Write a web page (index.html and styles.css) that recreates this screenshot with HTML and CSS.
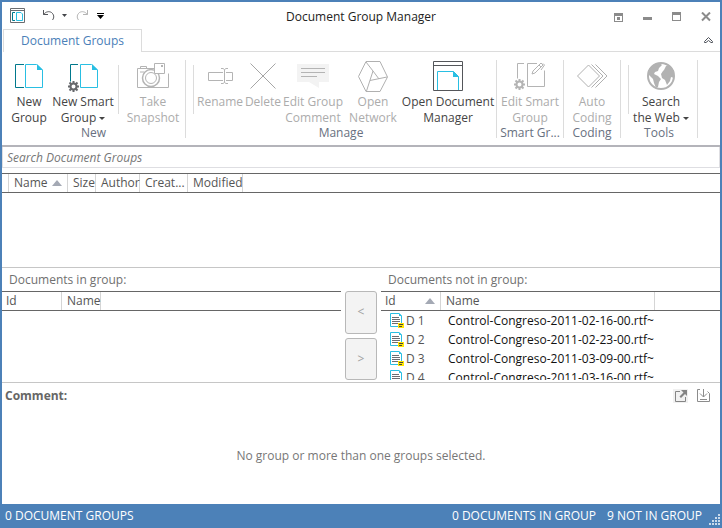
FILE: index.html
```
<!DOCTYPE html>
<html lang="en">
<head>
<meta charset="utf-8">
<title>Document Group Manager</title>
<link rel="stylesheet" href="styles.css">
</head>
<body>
<div class="window">
  <header class="titlebar">
    <div class="quick">
      <svg class="app-icon" width="15" height="15" viewBox="0 0 15 15" fill="none"><path d="M.5.5h14v14H.5zM.5 2.500h14" stroke="#6a6c70"/><path d="M5 4.500H2.500v8H5" stroke="#00788c"/><path d="M6.500 4.500H11l1.500 1.500v6.500h-6z" stroke="#29bfe3"/></svg>
      <button class="bare undo" aria-label="Undo"><svg width="12" height="11" viewBox="0 0 12 11" fill="none" stroke="#54565a"><path d="M.5 0v4.500H5M.5 4.500C3 1.500 6 1 8.500 2.500c2.500 2 3 5 1 7.500"/></svg></button>
      <button class="bare undo-menu" aria-label="Undo history"><svg width="5" height="3"><path d="M0 0h5L2.500 3z" fill="#44464a"/></svg></button>
      <button class="bare redo" aria-label="Redo" disabled><svg width="12" height="11" viewBox="0 0 12 11" fill="none" stroke="#b4b4b4"><path d="M11.500 0v4.500H7M11.500 4.500C9 1.500 6 1 3.500 2.500 1 4.500.5 7.500 2.500 10"/></svg></button>
      <button class="bare customize" aria-label="Customize toolbar"><svg width="7" height="6"><path d="M0 0h7v1H0zM0 2h7L3.500 6z" fill="#000"/></svg></button>
    </div>
    <h1>Document Group Manager</h1>
    <div class="controls">
      <button class="bare" aria-label="Ribbon display"><svg width="9" height="9"><path d="M0 0h9v9H0zM1 3v5h7V3z" fill="#8b8b8b" fill-rule="evenodd"/><path d="M3 4h3v3H3z" fill="#8b8b8b"/></svg></button>
      <button class="bare" aria-label="Minimize"><svg width="9" height="9"><path d="M0 4h9v3H0z" fill="#8b8b8b"/></svg></button>
      <button class="bare" aria-label="Maximize"><svg width="9" height="11"><path d="M0 0h9v9H0zM1 3v5h7V3z" fill="#8b8b8b" fill-rule="evenodd"/></svg></button>
      <button class="bare" aria-label="Close"><svg width="10" height="11" fill="none" stroke="#8b8b8b" stroke-width="2"><path d="M1 .5l8 8M9 .5l-8 8"/></svg></button>
    </div>
  </header>
  <nav class="tabs">
    <button class="tab">Document Groups</button>
    <span class="tab-rest"><button class="bare" aria-label="Collapse ribbon"><svg width="9" height="7" viewBox="0 0 9 7" fill="none" stroke="#50545c"><path d="M.5 4.500l4-4 4 4v1H7l-2.500-2-2.500 2H.5z"/></svg></button></span>
  </nav>
  <div class="ribbon">
    <section class="group new">
      <div class="tools">
        <button class="tool w54"><svg width="28" height="24" fill="none"><path d="M9 .5H.5v23H9" stroke="#00788c"/><path d="M10.500.5h11l6 5.500v17.500h-17z" stroke="#29bfe3"/><path d="M22 0v6h6z" fill="#29bfe3"/></svg><span>New<br>Group</span></button>
        <button class="tool w54"><svg class="geared" width="30" height="28" viewBox="-2 0 30 28" fill="none"><path d="M8 .5H.5v17" stroke="#00788c"/><path d="M10.500.5h11l6 5.500v17.500h-17z" stroke="#29bfe3"/><path d="M22 0v6h6z" fill="#29bfe3"/><use href="#gear" x="-2" y="17" color="#66686c"/></svg><span>New Smart<br>Group <i class="caret"></i></span></button>
        <span class="sep"></span>
        <button class="tool w52" disabled><svg width="32" height="26" viewBox="0 0 32 26" fill="none" stroke="#b4b4b4"><path d="M17.500 5.500H.5v19h31v-14M3.500 5.500v-2h6v2"/><circle cx="14" cy="15" r="8.500" stroke-width="1.500" fill="#fff"/><circle cx="14" cy="15" r="5.500"/><path d="M17.500.5h10v10h-10z" fill="#fff"/><path d="M3 9h4"/><path d="M24 2v2h2V2z" fill="#b4b4b4" stroke="none"/></svg><span>Take<br>Snapshot</span></button>
      </div>
      <h2>New</h2>
    </section>
    <section class="group manage">
      <div class="tools">
        <span class="sep"></span>
        <button class="tool w44" disabled><svg width="25" height="16" fill="none" stroke="#b4b4b4"><path d="M15 4.500H.5v8H15M18 4.500h6.500v8H18M13 .5h2l1.500 1 1.500-1h2M16.500 1.500v13M13 15.500h2l1.500-1 1.500 1h2"/></svg><span>Rename</span></button>
        <button class="tool w42" disabled><svg width="26" height="26" fill="none" stroke="#a6a6a6"><path d="M.5.5l25 25M25.500.5l-25 25"/></svg><span>Delete</span></button>
        <button class="tool w58" disabled><svg width="32" height="24"><path d="M0 0h32v18H22v6l-10-6H0z" fill="#f3f3f3"/><path d="M4 4.500h24M4 8.500h24M4 12.500h16" stroke="#b4b4b4"/></svg><span>Edit Group<br>Comment</span></button>
        <button class="tool w62" disabled><svg width="30" height="31" fill="none" stroke="#b0b0b0"><path d="M8 .5h14L29.500 16 22 30.500H8L.5 15.500zM8.500 30L15 10 8 1M15 10l6 8M12 19.500l17-3.500"/></svg><span>Open<br>Network</span></button>
        <button class="tool w88"><svg width="30" height="30" fill="none"><path d="M.5.5h29v29H.5zM.5 4.500h29" stroke="#54565a"/><path d="M4.500 29V10.500h16l5 5V29" stroke="#29bfe3"/><path d="M20 10v6h6z" fill="#29bfe3"/></svg><span>Open Document<br>Manager</span></button>
      </div>
      <h2>Manage</h2>
    </section>
    <section class="group">
      <div class="tools">
        <button class="tool w66" disabled><svg width="32" height="28" fill="none" stroke="#b4b4b4"><path d="M10 1.500H3.500v15M23 1.500H13.500v23h17v-16"/><path d="M18 12l1-3 8-8 2 2-8 8zM25 3l2 2M29 1.500l1.500 1.500L27 8"/><use href="#gear" x="0" y="17" color="#b4b4b4"/></svg><span>Edit Smart<br>Group</span></button>
      </div>
      <h2>Smart Gr...</h2>
    </section>
    <section class="group">
      <div class="tools">
        <button class="tool w56" disabled><svg width="31" height="24" fill="none" stroke="#b0b0b0"><path d="M11.500 1L.5 12l11 11 11-11zM14.500.5L26 12 14.500 23.500M18.500.5L30 12 18.500 23.500"/></svg><span>Auto<br>Coding</span></button>
      </div>
      <h2>Coding</h2>
    </section>
    <section class="group web">
      <div class="tools">
        <span class="sep"></span>
        <button class="tool w56"><svg width="28" height="28"><circle cx="14" cy="14" r="13" fill="#fff" stroke="#b2b2b2" stroke-width="2"/><path d="M3 6L8 2l5-1 2 2-3 3-1 3-3 1-1 2 4 2 3 3-2 3-1 5-2 1-2-5-1-4-4-4-1-4zM17 8l2-4 3-1 5 6v7l-3-1-1 4-3 4-2-5-3-2-1-4 2-3z" fill="#b2b2b2"/></svg><span>Search<br>the Web <i class="caret"></i></span></button>
      </div>
      <h2>Tools</h2>
    </section>
  </div>
  <input class="search" type="text" placeholder="Search Document Groups" aria-label="Search Document Groups">
  <main>
    <section class="groups">
      <table>
        <colgroup><col class="c7"><col class="c59"><col class="c28"><col class="c44"><col class="c48"><col class="c55"><col></colgroup>
        <thead><tr><th></th><th>Name <i class="sort"></i></th><th>Size</th><th>Author</th><th>Creat...</th><th>Modified</th><th></th></tr></thead>
      </table>
    </section>
    <section class="docs">
      <div class="pane">
        <h3>Documents in group:</h3>
        <table>
          <colgroup><col class="c60"><col class="c39"><col></colgroup>
          <thead><tr><th class="id">Id</th><th>Name</th><th></th></tr></thead>
        </table>
      </div>
      <div class="moves">
        <button disabled aria-label="Add to group">&lt;</button>
        <button disabled aria-label="Remove from group">&gt;</button>
      </div>
      <div class="pane">
        <h3>Documents not in group:</h3>
        <table>
          <colgroup><col class="c60"><col class="c214"><col></colgroup>
          <thead><tr><th class="id">Id <i class="sort"></i></th><th>Name</th><th></th></tr></thead>
          <tbody>
            <tr><td><svg width="14" height="15"><use href="#doc"/></svg>D 1</td><td>Control-Congreso-2011-02-16-00.rtf~</td><td></td></tr>
            <tr><td><svg width="14" height="15"><use href="#doc"/></svg>D 2</td><td>Control-Congreso-2011-02-23-00.rtf~</td><td></td></tr>
            <tr><td><svg width="14" height="15"><use href="#doc"/></svg>D 3</td><td>Control-Congreso-2011-03-09-00.rtf~</td><td></td></tr>
            <tr><td><svg width="14" height="15"><use href="#doc"/></svg>D 4</td><td>Control-Congreso-2011-03-16-00.rtf~</td><td></td></tr>
          </tbody>
        </table>
      </div>
    </section>
    <section class="comment">
      <div class="comment-head">
        <h3>Comment:</h3>
        <button class="bare" aria-label="Open comment editor"><svg width="15" height="14"><path d="M0 0h15v14H0z" fill="#f1f1f1"/><path d="M7 2.500H2.500v10h10V8" fill="none" stroke="#858585"/><path d="M8 1h6v6l-2-2-4 4-1.500-1.500 4-4z" fill="#858585"/></svg></button>
        <button class="bare" aria-label="Save comment"><svg width="13" height="13" fill="none" stroke="#8c8c8c"><path d="M3 .5H.5v12h12v-8l-2-2M6.500 0v8M3 4.500L6.500 8 10 4.500M3 10.500h7"/></svg></button>
      </div>
      <p>No group or more than one groups selected.</p>
    </section>
  </main>
  <footer>
    <span class="total">0 DOCUMENT GROUPS</span>
    <span>0 DOCUMENTS IN GROUP</span>
    <span>9 NOT IN GROUP</span>
    <svg width="11" height="11" fill="#c9daeb"><path d="M9 0h2v2H9zM6 3h2v2H6zM9 3h2v2H9zM3 6h2v2H3zM6 6h2v2H6zM9 6h2v2H9zM0 9h2v2H0zM3 9h2v2H3zM6 9h2v2H6zM9 9h2v2H9z"/></svg>
  </footer>
</div>
<svg class="defs" width="0" height="0" aria-hidden="true">
  <symbol id="gear" width="11" height="11" viewBox="0 0 11 11"><circle cx="5.500" cy="5.500" r="3" fill="none" stroke="currentColor" stroke-width="2"/><path d="M5.500 0v2M5.500 9v2M0 5.500h2M9 5.500h2M1.500 1.500L3 3M8 8l1.500 1.500M9.500 1.500L8 3M3 8L1.500 9.500" stroke="currentColor" stroke-width="2"/></symbol>
  <symbol id="doc" width="14" height="15" viewBox="0 0 14 15"><path d="M.5.5H9l2.500 2.500v10.500H.5z" fill="#fff" stroke="#29bfe3"/><path d="M9 0v3h3z" fill="#29bfe3"/><path d="M2 4.500h7M2 6.500h8M2 8.500h8M2 10.500h6" stroke="#6b6d71"/><path d="M8 10h6v5H8z" fill="#ffe600"/><path d="M9 11.500h4M9 13.500h3" stroke="#444"/></symbol>
</svg>
</body>
</html>
```

FILE: styles.css
```
* { box-sizing: border-box; }
body { margin: 0; font: 12px/16px "Open Sans", "Noto Sans", sans-serif; color: #444; }
button, input { font: inherit; color: inherit; }
h1, h2, h3, p { margin: 0; font-size: 12px; font-weight: 400; }
svg { display: block; flex: none; }
.defs { position: absolute; }
.bare { padding: 0; border: 0; background: none; display: flex; }

.window { height: 100vh; display: flex; flex-direction: column; background: #fff; border: 2px solid #4c81b8; border-bottom: 0; }

.titlebar { height: 27px; flex: none; display: grid; grid-template-columns: 1fr auto 1fr; align-items: center; }
.titlebar h1 { color: #222; padding-top: 2px; }
.quick { display: flex; align-items: center; padding-left: 8px; }
.app-icon { margin-right: 18px; }
.undo { margin-right: 7px; }
.undo-menu { margin-right: 9px; }
.redo { margin-right: 9px; }
.controls { display: flex; justify-content: flex-end; align-items: center; gap: 20px; padding: 3px 9px 0 0; }

.tabs { display: flex; height: 23px; flex: none; padding-left: 1px; }
.tab { width: 139px; padding: 0; border: 1px solid #dcdcdc; border-bottom: 0; background: #fff; color: #4a80b8; }
.tab-rest { flex: 1; display: flex; justify-content: flex-end; align-items: center; padding-right: 7px; border-bottom: 1px solid #dcdcdc; }

.ribbon { display: flex; flex: none; height: 95px; padding-top: 8px; border-bottom: 2px solid #b4b4ba; }
.group { height: 78px; border-right: 1px solid #dcdcdc; }
.group h2 { text-align: center; line-height: 14px; color: #687080; }
.tools { display: flex; height: 66px; }
.sep { width: 1px; height: 49px; margin: 5px 4px 0 7px; background: #dcdcdc; }
.new .tools { padding-right: 6px; }
.new .sep { margin: 5px 8px 0; }
.manage .tools { padding-right: 4px; }
.web .tools { padding-right: 8px; }
.tool { display: grid; grid-template-rows: 32px auto; align-content: start; justify-items: center; row-gap: 2px; padding: 0; border: 0; background: none; white-space: nowrap; justify-content: center; }
.tool svg { align-self: center; }
.tool .geared { align-self: end; }
.tool:disabled { color: #acacac; }
.w42 { width: 42px; } .w44 { width: 44px; } .w52 { width: 52px; } .w54 { width: 54px; } .w56 { width: 56px; }
.w58 { width: 58px; } .w62 { width: 62px; } .w66 { width: 66px; } .w88 { width: 88px; }
.caret { display: inline-block; border: 3px solid transparent; border-top-color: #444; border-bottom: 0; vertical-align: 2px; }

.search { flex: none; width: 100%; height: 21px; padding: 0 4px; border: 1px solid #dedee2; border-top: 0; outline: 0; font-style: italic; }
.search::placeholder { color: #777; opacity: 1; }

main { flex: 1; min-height: 0; display: flex; flex-direction: column; }
main > section { min-height: 0; overflow: hidden; }
.groups { flex: 94 1 0; padding-top: 5px; border-bottom: 1px solid #c6c6c6; }
.docs { flex: 112 1 0; display: grid; grid-template-columns: 1fr 40px 1fr; grid-template-rows: 100%; padding-bottom: 2px; border-bottom: 1px solid #c6c6c6; }
.comment { flex: 121 1 0; }

table { width: 100%; table-layout: fixed; border-collapse: separate; border-spacing: 0; }
th { height: 20px; padding: 0 0 0 5px; border: solid #666; border-width: 1px 0; text-align: left; font-weight: 400; color: #555; white-space: nowrap; overflow: hidden; background: linear-gradient(#d5d5d5, #d5d5d5) right / 1px 100% no-repeat; }
th:last-child { background: none; }
.id { padding-left: 4px; }
.sort { float: right; margin: 5px 6px 0 0; border: 5px solid transparent; border-bottom: 6px solid #a4a9b4; border-top: 0; }
td { height: 19px; padding: 0 0 0 7px; color: #111; white-space: nowrap; }
td:first-child { padding-left: 9px; color: #555; }
td svg { float: left; margin-right: 2px; }
.c7 { width: 7px; } .c28 { width: 28px; } .c39 { width: 39px; } .c44 { width: 44px; } .c48 { width: 48px; }
.c55 { width: 55px; } .c59 { width: 59px; } .c60 { width: 60px; } .c214 { width: 214px; }

.pane { overflow: hidden; }
.pane h3 { height: 23px; padding-left: 7px; line-height: 23px; color: #707070; }
.moves { display: flex; flex-direction: column; gap: 4px; padding: 23px 4px 0; }
.moves button { flex: 1; padding: 0; border: 1px solid #b8b8b8; border-radius: 3px; background: #f3f3f3; color: #a0a0a0; }

.comment { display: flex; flex-direction: column; }
.comment-head { display: flex; align-items: center; gap: 9px; height: 25px; padding: 0 10px 0 3px; }
.comment-head h3 { flex: 1; font-weight: 700; color: #666; }
.comment p { flex: 1; display: grid; place-items: center; color: #777; }

footer { flex: none; height: 24px; display: flex; align-items: center; gap: 11px; padding-left: 3px; background: #4c81b8; color: #fff; }
.total { flex: 1; }
footer svg { align-self: flex-end; margin: 0 0 3px -4px; }
```
